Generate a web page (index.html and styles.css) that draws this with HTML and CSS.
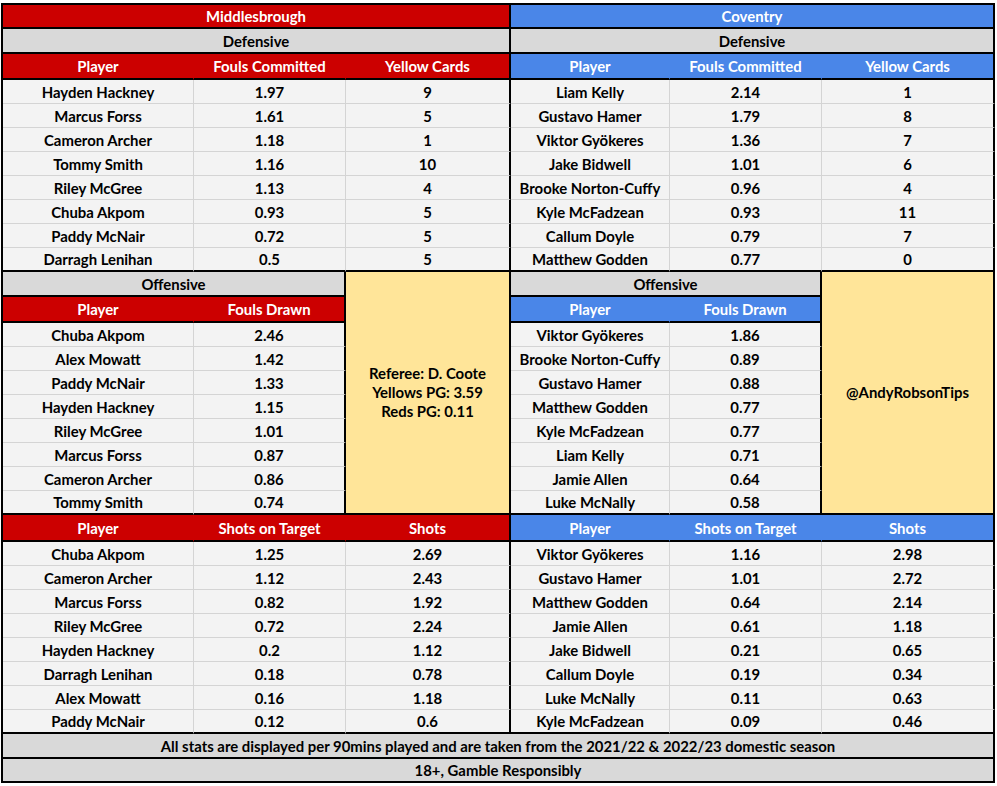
FILE: index.html
```html
<!DOCTYPE html>
<html>
<head>
<meta charset="utf-8">
<link rel="stylesheet" href="styles.css">
</head>
<body>
<table class="sheet">
<colgroup>
<col class="c1"><col class="c2"><col class="c3"><col class="c4"><col class="c5"><col class="c6">
</colgroup>
<tbody>
<tr class="h-title thick">
  <td colspan="3" class="red sep">Middlesbrough</td>
  <td colspan="3" class="blue sep">Coventry</td>
</tr>
<tr class="h-sect thick">
  <td colspan="3" class="grey sep">Defensive</td>
  <td colspan="3" class="grey sep">Defensive</td>
</tr>
<tr class="h-head thick">
  <td class="red">Player</td><td class="red">Fouls Committed</td><td class="red sep">Yellow Cards</td>
  <td class="blue">Player</td><td class="blue">Fouls Committed</td><td class="blue sep">Yellow Cards</td>
</tr>
<tr class="row"><td>Hayden Hackney</td><td>1.97</td><td class="sep">9</td><td>Liam Kelly</td><td>2.14</td><td class="sep">1</td></tr>
<tr class="row"><td>Marcus Forss</td><td>1.61</td><td class="sep">5</td><td>Gustavo Hamer</td><td>1.79</td><td class="sep">8</td></tr>
<tr class="row"><td>Cameron Archer</td><td>1.18</td><td class="sep">1</td><td>Viktor Gyökeres</td><td>1.36</td><td class="sep">7</td></tr>
<tr class="row"><td>Tommy Smith</td><td>1.16</td><td class="sep">10</td><td>Jake Bidwell</td><td>1.01</td><td class="sep">6</td></tr>
<tr class="row"><td>Riley McGree</td><td>1.13</td><td class="sep">4</td><td>Brooke Norton-Cuffy</td><td>0.96</td><td class="sep">4</td></tr>
<tr class="row"><td>Chuba Akpom</td><td>0.93</td><td class="sep">5</td><td>Kyle McFadzean</td><td>0.93</td><td class="sep">11</td></tr>
<tr class="row"><td>Paddy McNair</td><td>0.72</td><td class="sep">5</td><td>Callum Doyle</td><td>0.79</td><td class="sep">7</td></tr>
<tr class="row thick"><td>Darragh Lenihan</td><td>0.5</td><td class="sep">5</td><td>Matthew Godden</td><td>0.77</td><td class="sep">0</td></tr>

<tr class="h-sect2 thick">
  <td colspan="2" class="grey sep">Offensive</td>
  <td rowspan="10" class="yellow sep thickb"><div class="note">Referee: D. Coote<br>Yellows PG: 3.59<br>Reds PG: 0.11</div></td>
  <td colspan="2" class="grey sep">Offensive</td>
  <td rowspan="10" class="yellow sep thickb"><div class="note">@AndyRobsonTips</div></td>
</tr>
<tr class="h-head thick">
  <td class="red">Player</td><td class="red sep">Fouls Drawn</td>
  <td class="blue">Player</td><td class="blue sep">Fouls Drawn</td>
</tr>
<tr class="row"><td>Chuba Akpom</td><td class="sep">2.46</td><td>Viktor Gyökeres</td><td class="sep">1.86</td></tr>
<tr class="row"><td>Alex Mowatt</td><td class="sep">1.42</td><td>Brooke Norton-Cuffy</td><td class="sep">0.89</td></tr>
<tr class="row"><td>Paddy McNair</td><td class="sep">1.33</td><td>Gustavo Hamer</td><td class="sep">0.88</td></tr>
<tr class="row"><td>Hayden Hackney</td><td class="sep">1.15</td><td>Matthew Godden</td><td class="sep">0.77</td></tr>
<tr class="row"><td>Riley McGree</td><td class="sep">1.01</td><td>Kyle McFadzean</td><td class="sep">0.77</td></tr>
<tr class="row"><td>Marcus Forss</td><td class="sep">0.87</td><td>Liam Kelly</td><td class="sep">0.71</td></tr>
<tr class="row"><td>Cameron Archer</td><td class="sep">0.86</td><td>Jamie Allen</td><td class="sep">0.64</td></tr>
<tr class="row thick"><td>Tommy Smith</td><td class="sep">0.74</td><td>Luke McNally</td><td class="sep">0.58</td></tr>

<tr class="h-head2 thick">
  <td class="red">Player</td><td class="red">Shots on Target</td><td class="red sep">Shots</td>
  <td class="blue">Player</td><td class="blue">Shots on Target</td><td class="blue sep">Shots</td>
</tr>
<tr class="row"><td>Chuba Akpom</td><td>1.25</td><td class="sep">2.69</td><td>Viktor Gyökeres</td><td>1.16</td><td class="sep">2.98</td></tr>
<tr class="row"><td>Cameron Archer</td><td>1.12</td><td class="sep">2.43</td><td>Gustavo Hamer</td><td>1.01</td><td class="sep">2.72</td></tr>
<tr class="row"><td>Marcus Forss</td><td>0.82</td><td class="sep">1.92</td><td>Matthew Godden</td><td>0.64</td><td class="sep">2.14</td></tr>
<tr class="row"><td>Riley McGree</td><td>0.72</td><td class="sep">2.24</td><td>Jamie Allen</td><td>0.61</td><td class="sep">1.18</td></tr>
<tr class="row"><td>Hayden Hackney</td><td>0.2</td><td class="sep">1.12</td><td>Jake Bidwell</td><td>0.21</td><td class="sep">0.65</td></tr>
<tr class="row"><td>Darragh Lenihan</td><td>0.18</td><td class="sep">0.78</td><td>Callum Doyle</td><td>0.19</td><td class="sep">0.34</td></tr>
<tr class="row"><td>Alex Mowatt</td><td>0.16</td><td class="sep">1.18</td><td>Luke McNally</td><td>0.11</td><td class="sep">0.63</td></tr>
<tr class="row thick"><td>Paddy McNair</td><td>0.12</td><td class="sep">0.6</td><td>Kyle McFadzean</td><td>0.09</td><td class="sep">0.46</td></tr>

<tr class="h-sect thick">
  <td colspan="6" class="grey sep">All stats are displayed per 90mins played and are taken from the 2021/22 &amp; 2022/23 domestic season</td>
</tr>
<tr class="h-foot thick">
  <td colspan="6" class="grey sep">18+, Gamble Responsibly</td>
</tr>
</tbody>
</table>
</body>
</html>
```

FILE: styles.css
```css
html, body {
  margin: 0;
  padding: 0;
  background: #ffffff;
}

body {
  padding: 3px 0 0 1px;
}

.sheet {
  table-layout: fixed;
  border-collapse: separate;
  border-spacing: 0;
  width: 994px;
  border-top: 2px solid #000;
  border-left: 2px solid #000;
  font-family: Lato, "Liberation Sans", sans-serif;
  font-weight: 700;
  font-size: 14.9px;
  color: #000;
}

.c1 { width: 191px; }
.c2 { width: 152px; }
.c3 { width: 165px; }
.c4 { width: 159px; }
.c5 { width: 152px; }
.c6 { width: 173px; }

.sheet td {
  padding: 0;
  text-align: center;
  vertical-align: middle;
  line-height: 16px;
  white-space: nowrap;
  overflow: hidden;
  background: #f3f3f3;
  border-right: 1px solid #d4d4d4;
  border-bottom: 1px solid #d4d4d4;
}

.sheet tr.thick td {
  border-bottom: 2px solid #000;
}

.sheet td.sep {
  border-right: 2px solid #000;
}

.sheet td.thickb {
  border-bottom: 2px solid #000;
}

.sheet td.red {
  background: #cc0000;
  color: #fff;
  border-right-color: #cc0000;
}

.sheet td.blue {
  background: #4a86e8;
  color: #fff;
  border-right-color: #4a86e8;
}

.sheet td.red.sep,
.sheet td.blue.sep {
  border-right-color: #000;
}

.sheet td.grey {
  background: #d9d9d9;
}

.sheet td.yellow {
  background: #ffe599;
}

.note {
  line-height: 19px;
}

.h-title { height: 24px; }
.h-sect { height: 25px; }
.h-sect2 { height: 25px; }
.h-head { height: 26px; }
.h-head2 { height: 27px; }
.h-foot { height: 24px; }
.row { height: 24px; }
```
